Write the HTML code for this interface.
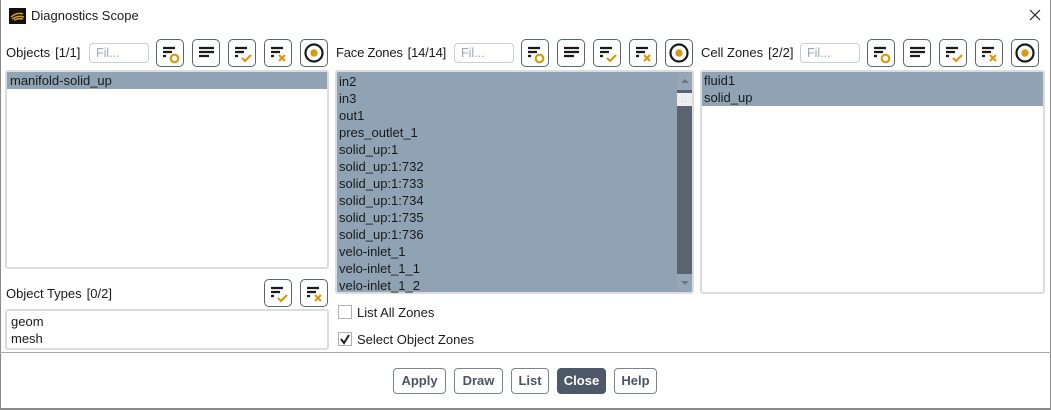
<!DOCTYPE html>
<html><head><meta charset="utf-8"><style>
*{box-sizing:border-box;margin:0;padding:0}
body{width:1051px;height:410px;background:#fff;font-family:"Liberation Sans",sans-serif;font-size:13px;color:#1a1a1a;position:relative;overflow:hidden}
.a{position:absolute}
.win{position:absolute;left:0;top:0;width:1051px;height:410px;border:1px solid #8a8a8a;border-top:none}
.lbl{position:absolute;font-size:13px;white-space:nowrap}
.lbl b{font-weight:normal;margin-left:5px}
.fil{position:absolute;height:20px;border:1px solid #c8ced6;border-radius:4px;color:#9aa;font-size:12.5px;padding:2px 6px;background:#fff}
.btn{position:absolute;width:28px;height:28px;border:1px solid #5a6470;border-radius:5px;background:#fff}
.btn svg{position:absolute;left:-1px;top:-1px}
.list{position:absolute;border:2px solid #dcdcdc;border-radius:3px;background:#fff}
.row{height:17px;line-height:17px;padding-left:2px;white-space:nowrap}
.sel{background:#8fa3b5}
.cb{position:absolute;width:14px;height:14px;border:1px solid #b0b0b0;background:#fff}
.pb{position:absolute;top:368px;height:26px;border:1px solid #7a8490;border-radius:4px;background:#fff;font-weight:bold;color:#4a5562;font-size:13px;text-align:center;line-height:24px}
</style></head><body>
<div class="win"></div>
<svg class="a" style="left:9px;top:8px" width="17" height="16" viewBox="0 0 17 16"><rect width="17" height="16" fill="#111"/><path d="M2 9 Q8 4 14 6 M3 11 Q9 7 15 9 M5 12 Q10 10 14 11" stroke="#d9a020" stroke-width="1.5" fill="none"/></svg>
<div class="lbl" style="left:31px;top:8px">Diagnostics Scope</div>
<svg class="a" style="left:1029px;top:9px" width="12" height="12"><path d="M1 1L11 11M11 1L1 11" stroke="#222" stroke-width="1.2"/></svg>

<div class="lbl" style="left:6px;top:45px">Objects<b>[1/1]</b></div>
<div class="fil" style="left:89px;top:43px;width:60px">Fil...</div>

<div class="lbl" style="left:336px;top:45px;letter-spacing:-0.2px">Face Zones<b>[14/14]</b></div>
<div class="fil" style="left:454px;top:43px;width:60px">Fil...</div>

<div class="lbl" style="left:701px;top:45px">Cell Zones<b>[2/2]</b></div>
<div class="fil" style="left:800px;top:43px;width:60px">Fil...</div>

<svg width="0" height="0" style="position:absolute"><defs>
<g id="i1"><path d="M7 9h12M7 13h9M7 17h3" stroke="#1a1a1a" stroke-width="2.2"/><circle cx="18.5" cy="19.5" r="3.8" stroke="#d99a10" stroke-width="2.2" fill="none"/></g>
<g id="i2"><path d="M7 9h15M7 13h15M7 17h10" stroke="#1a1a1a" stroke-width="2.2"/></g>
<g id="i3"><path d="M7 9h12M7 13h9M7 17h3" stroke="#1a1a1a" stroke-width="2.2"/><path d="M14 19l3 3 6-6" stroke="#d99a10" stroke-width="2.2" fill="none"/></g>
<g id="i4"><path d="M7 9h12M7 13h9M7 17h3" stroke="#1a1a1a" stroke-width="2.2"/><path d="M15 16l6 6M21 16l-6 6" stroke="#d99a10" stroke-width="2.2"/></g>
<g id="i5"><circle cx="14" cy="14" r="8.5" stroke="#1a1a1a" stroke-width="2.2" fill="none"/><circle cx="14" cy="14" r="3.7" fill="#d99a10"/></g>
</defs></svg>

<div class="btn" style="left:156px;top:39px"><svg width="28" height="28"><use href="#i1"/></svg></div>
<div class="btn" style="left:192px;top:39px"><svg width="28" height="28"><use href="#i2"/></svg></div>
<div class="btn" style="left:228px;top:39px"><svg width="28" height="28"><use href="#i3"/></svg></div>
<div class="btn" style="left:264px;top:39px"><svg width="28" height="28"><use href="#i4"/></svg></div>
<div class="btn" style="left:300px;top:39px"><svg width="28" height="28"><use href="#i5"/></svg></div>

<div class="btn" style="left:521px;top:39px"><svg width="28" height="28"><use href="#i1"/></svg></div>
<div class="btn" style="left:557px;top:39px"><svg width="28" height="28"><use href="#i2"/></svg></div>
<div class="btn" style="left:593px;top:39px"><svg width="28" height="28"><use href="#i3"/></svg></div>
<div class="btn" style="left:629px;top:39px"><svg width="28" height="28"><use href="#i4"/></svg></div>
<div class="btn" style="left:665px;top:39px"><svg width="28" height="28"><use href="#i5"/></svg></div>

<div class="btn" style="left:867px;top:39px"><svg width="28" height="28"><use href="#i1"/></svg></div>
<div class="btn" style="left:903px;top:39px"><svg width="28" height="28"><use href="#i2"/></svg></div>
<div class="btn" style="left:939px;top:39px"><svg width="28" height="28"><use href="#i3"/></svg></div>
<div class="btn" style="left:975px;top:39px"><svg width="28" height="28"><use href="#i4"/></svg></div>
<div class="btn" style="left:1011px;top:39px"><svg width="28" height="28"><use href="#i5"/></svg></div>

<div class="list" style="left:5px;top:70px;width:324px;height:199px"><div class="row sel" style="padding-left:3px">manifold-solid_up</div></div>

<div class="list" style="left:335px;top:70px;width:359px;height:224px;background:#8fa3b5">
<div style="padding-top:1px">
<div class="row">in2</div><div class="row">in3</div><div class="row">out1</div><div class="row">pres_outlet_1</div><div class="row">solid_up:1</div><div class="row">solid_up:1:732</div><div class="row">solid_up:1:733</div><div class="row">solid_up:1:734</div><div class="row">solid_up:1:735</div><div class="row">solid_up:1:736</div><div class="row">velo-inlet_1</div><div class="row">velo-inlet_1_1</div><div class="row">velo-inlet_1_2</div>
</div>
<div class="a" style="left:340px;top:1px;width:15px;height:218px;background:#5b6270"></div>
<div class="a" style="left:340px;top:1px;width:15px;height:17px;background:#96a6b5"></div>
<div class="a" style="left:344px;top:7px;width:0;height:0;border-left:4px solid transparent;border-right:4px solid transparent;border-bottom:4px solid #6a7684"></div>
<div class="a" style="left:340px;top:21px;width:15px;height:13px;background:repeating-conic-gradient(#ddd 0 25%,#fff 0 50%) 0 0/3px 3px"></div>
<div class="a" style="left:340px;top:202px;width:15px;height:17px;background:#96a6b5"></div>
<div class="a" style="left:344px;top:209px;width:0;height:0;border-left:4px solid transparent;border-right:4px solid transparent;border-top:4px solid #6a7684"></div>
</div>

<div class="list" style="left:700px;top:70px;width:345px;height:224px"><div class="row sel">fluid1</div><div class="row sel">solid_up</div></div>

<div class="lbl" style="left:6px;top:286px">Object Types<b>[0/2]</b></div>
<div class="btn" style="left:264px;top:279px"><svg width="28" height="28"><use href="#i3"/></svg></div>
<div class="btn" style="left:300px;top:279px"><svg width="28" height="28"><use href="#i4"/></svg></div>
<div class="list" style="left:5px;top:309px;width:324px;height:41px;padding-top:2px"><div class="row" style="padding-left:4px">geom</div><div class="row" style="padding-left:4px">mesh</div></div>

<div class="cb" style="left:338px;top:305px"></div>
<div class="lbl" style="left:357px;top:305px">List All Zones</div>
<div class="cb" style="left:338px;top:332px"></div>
<svg class="a" style="left:339px;top:333px" width="12" height="12"><path d="M2 6l3 4 5-8" stroke="#222" stroke-width="2" fill="none"/></svg>
<div class="lbl" style="left:357px;top:332px">Select Object Zones</div>

<div class="a" style="left:0;top:352px;width:1051px;height:1px;background:#a8a8a8"></div>

<div class="pb" style="left:393px;width:53px">Apply</div>
<div class="pb" style="left:454px;width:49px">Draw</div>
<div class="pb" style="left:511px;width:38px">List</div>
<div class="pb" style="left:557px;width:49px;background:#4d5968;color:#fff;border-color:#4d5968">Close</div>
<div class="pb" style="left:614px;width:43px">Help</div>
<div class="a" style="left:0;top:408px;width:1051px;height:2px;background:#8a8a8a"></div>
</body></html>
